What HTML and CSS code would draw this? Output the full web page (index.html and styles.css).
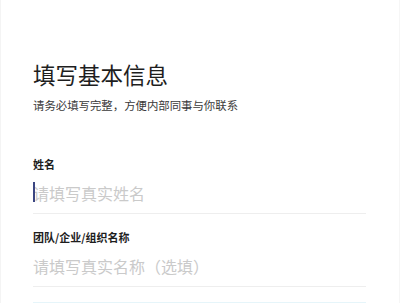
FILE: index.html
```html
<!DOCTYPE html>
<html lang="zh-CN">
<head>
<meta charset="utf-8">
<link rel="stylesheet" href="styles.css">
</head>
<body>
<div class="page">
  <h1 class="title">填写基本信息</h1>
  <p class="subtitle">请务必填写完整，方便内部同事与你联系</p>
  <div class="field first">
    <div class="label">姓名</div>
    <div class="input-wrap">
      <span class="caret"></span>
      <input class="input" type="text" placeholder="请填写真实姓名">
    </div>
  </div>
  <div class="field">
    <div class="label">团队/企业/组织名称</div>
    <div class="input-wrap">
      <input class="input" type="text" placeholder="请填写真实名称（选填）">
    </div>
  </div>
  <div class="button-top"></div>
</div>
</body>
</html>
```

FILE: styles.css
```css
html, body {
  margin: 0;
  padding: 0;
  background: #ffffff;
}
body {
  font-family: "Noto Sans CJK SC", "Noto Sans", sans-serif;
  color: #222;
}
.page {
  width: 400px;
  height: 303px;
  box-sizing: border-box;
  padding: 63px 33px 0 32px;
  border-left: 1px solid #f4f4f4;
  border-right: 1px solid #f6f6f6;
  overflow: hidden;
}
.title {
  margin: 0;
  font-size: 22.5px;
  line-height: 22px;
  height: 22px;
  font-weight: 400;
  color: #1e1e1e;
}
.subtitle {
  margin: 14px 0 0;
  font-size: 11.4px;
  line-height: 12px;
  color: #3a3a3a;
  white-space: nowrap;
}
.field {
  margin-top: 17px;
}
.field.first {
  margin-top: 47px;
}
.label {
  font-size: 11px;
  line-height: 12px;
  font-weight: 700;
  color: #1e1e1e;
}
.input-wrap {
  position: relative;
  margin-top: 13px;
  padding-bottom: 10px;
  border-bottom: 1px solid #eeeeee;
}
.input {
  display: block;
  width: 100%;
  height: 20px;
  margin: 0;
  padding: 0;
  border: 0;
  outline: none;
  background: transparent;
  font-family: "Noto Sans CJK SC", "Noto Sans", sans-serif;
  font-size: 16px;
  line-height: 20px;
  color: #222;
}
.input::placeholder {
  color: #cacaca;
}
.caret {
  position: absolute;
  left: 0;
  top: -1px;
  width: 2px;
  height: 20px;
  background: #3b4682;
}
.button-top {
  margin-top: 15px;
  height: 12px;
  background: #e6f5fa;
}
```
